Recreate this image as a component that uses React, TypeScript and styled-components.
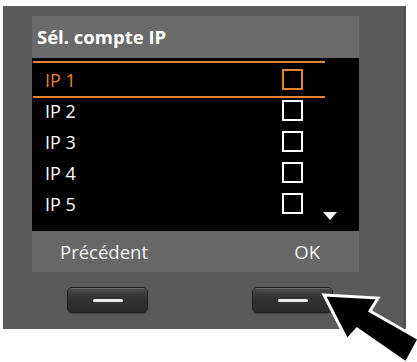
import React from 'react';
import styled, { createGlobalStyle } from 'styled-components';

const Global = createGlobalStyle`
  html, body { margin: 0; padding: 0; background: #fff; }
  body { font-family: "Open Sans", "DejaVu Sans", sans-serif; }
`;

const ORANGE = '#e8842f';

const Page = styled.div`
  position: relative;
  width: 417px;
  height: 362px;
  overflow: hidden;
  padding: 6px 11px 0 3px;
  box-sizing: border-box;
`;

const Handset = styled.div`
  width: 403px;
  height: 323px;
  background: #5a5a5a;
  padding: 10px 0 0 29px;
  box-sizing: border-box;
  border-right: 3px solid #525252;
  display: flex;
  flex-direction: column;
`;

const Screen = styled.div`
  width: 327px;
  display: flex;
  flex-direction: column;
`;

const TitleBar = styled.div`
  height: 42px;
  background: #6a6a6a;
  padding: 0 0 2px 5px;
  box-sizing: border-box;
  display: flex;
  align-items: center;
  color: #fff;
  font-weight: 700;
  font-size: 18.5px;
`;

const List = styled.div`
  height: 173px;
  background: #000;
  padding-top: 6px;
  box-sizing: border-box;
  display: flex;
`;

const Rows = styled.div`
  width: 292px;
  margin-left: 1px;
  display: flex;
  flex-direction: column;
`;

const Row = styled.div<{ $selected?: boolean }>`
  height: 31px;
  flex: none;
  display: flex;
  align-items: center;
  justify-content: space-between;
  padding: ${p => (p.$selected ? '1px' : '0')} 22px ${p => (p.$selected ? '1px' : '0')} 12px;
  margin: ${p => (p.$selected ? '-3px 0' : '0')};
  border-top: ${p => (p.$selected ? `2px solid ${ORANGE}` : 'none')};
  border-bottom: ${p => (p.$selected ? `2px solid ${ORANGE}` : 'none')};
  color: ${p => (p.$selected ? ORANGE : '#fff')};
  font-size: 18px;
`;

const Check = styled.span`
  width: 21px;
  height: 21px;
  box-sizing: border-box;
  border: 2px solid currentColor;
`;

const ScrollCol = styled.div`
  flex: 1;
  display: flex;
  align-items: flex-end;
  padding-bottom: 11px;
  margin-left: -2px;
`;

const DownArrow = styled.span`
  width: 0;
  height: 0;
  border-left: 7px solid transparent;
  border-right: 7px solid transparent;
  border-top: 8px solid #fff;
`;

const Footer = styled.div`
  height: 41px;
  background: #676767;
  display: flex;
  justify-content: space-between;
  align-items: center;
  padding: 0 39px 0 28px;
  color: #f2f2f2;
  font-size: 18.5px;
`;

const ButtonRow = styled.div`
  display: flex;
  gap: 104px;
  padding-left: 35px;
  margin-top: 15px;
`;

const SoftKey = styled.div`
  width: 81px;
  height: 26px;
  box-sizing: border-box;
  border-radius: 5px;
  border: 1px solid #202020;
  background: linear-gradient(#4c4c4c, #343434 35%, #2c2c2c);
  box-shadow: inset 0 1px 0 rgba(255, 255, 255, 0.18), 0 1px 1px rgba(0, 0, 0, 0.3);
  display: flex;
  align-items: center;
  justify-content: center;
`;

const Dash = styled.span`
  width: 30px;
  height: 3px;
  border-radius: 1.5px;
  background: #ececec;
`;

const Pointer = styled.svg`
  position: absolute;
  left: 0;
  top: 0;
  pointer-events: none;
`;

const items = ['IP 1', 'IP 2', 'IP 3', 'IP 4', 'IP 5'];

export default function App() {
  return (
    <Page>
      <Global />
      <Handset>
        <Screen>
          <TitleBar>Sél. compte IP</TitleBar>
          <List>
            <Rows>
              {items.map((t, i) => (
                <Row key={t} $selected={i === 0}>
                  <span>{t}</span>
                  <Check />
                </Row>
              ))}
            </Rows>
            <ScrollCol>
              <DownArrow />
            </ScrollCol>
          </List>
          <Footer>
            <span>Précédent</span>
            <span>OK</span>
          </Footer>
        </Screen>
        <ButtonRow>
          <SoftKey><Dash /></SoftKey>
          <SoftKey><Dash /></SoftKey>
        </ButtonRow>
      </Handset>
      <Pointer width="417" height="362" viewBox="0 0 417 362">
        <polygon
          points="324,295 378,298 370,311 419,339 406,363 357,329 347,340"
          fill="#000"
          stroke="#fff"
          strokeWidth="3"
          strokeLinejoin="miter"
        />
      </Pointer>
    </Page>
  );
}
